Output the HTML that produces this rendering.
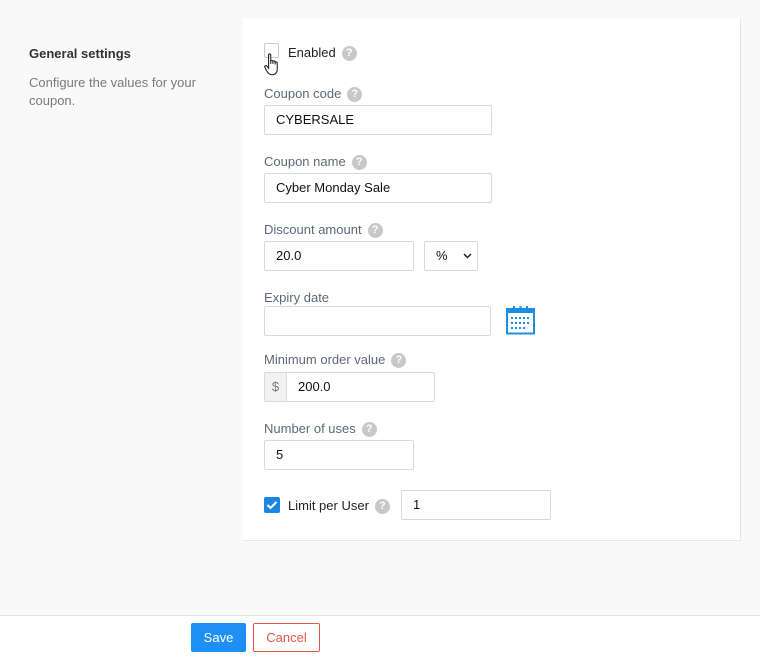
<!DOCTYPE html>
<html><head><style>
body{margin:0;width:760px;height:664px;background:#f9f9f9;font-family:"Liberation Sans",Arial,sans-serif;font-size:13px;position:relative;overflow:hidden}
.a{position:absolute}
.card{left:243px;top:18px;width:498px;height:523px;background:#fff;border:1px solid #e6e6e6;border-top:none;border-left:none;box-sizing:border-box}
.lbl{color:#5f6877;font-size:13px;line-height:16px}
.inp{border:1px solid #d9d9d9;box-sizing:border-box;height:30px;background:#fff;color:#111;line-height:28px;padding-left:11px;font-size:13px;border-radius:2px}
.q{display:inline-block;width:15px;height:15px;border-radius:50%;background:#c8c8c8;color:#fff;font-size:11px;font-weight:bold;text-align:center;line-height:15px;vertical-align:1px;margin-left:6px}
</style></head><body>
<div class="a" style="left:29px;top:46px;font-weight:bold;color:#333;font-size:13px">General settings</div>
<div class="a" style="left:29px;top:74px;color:#7a7a7a;font-size:13px;line-height:18px;width:190px">Configure the values for your coupon.</div>
<div class="a card"></div>

<div class="a" style="left:264px;top:43px;width:15px;height:15px;border:1px solid #ccc;box-sizing:border-box;border-radius:2px"></div>
<svg class="a" style="left:263px;top:52px" width="22" height="26" viewBox="0 0 20 24"><path d="M5 2.5c0-1 2-1 2 0V11l0-2.5c0-1 2-1 2 0V11l0-2c0-1 2-1 2 0v2.5l0-1.5c0-1 2-1 2 0v6c0 3-2 5-4.5 5S5 20 3 17L1.5 14c-.5-1 1-2 2-1L5 15z" fill="#fff" stroke="#222" stroke-width="1"/></svg>
<div class="a lbl" style="left:288px;top:45px;color:#222">Enabled<span class="q">?</span></div>

<div class="a lbl" style="left:264px;top:86px">Coupon code<span class="q">?</span></div>
<div class="a inp" style="left:264px;top:105px;width:228px">CYBERSALE</div>

<div class="a lbl" style="left:264px;top:154px">Coupon name<span class="q">?</span></div>
<div class="a inp" style="left:264px;top:173px;width:228px">Cyber Monday Sale</div>

<div class="a lbl" style="left:264px;top:222px">Discount amount<span class="q">?</span></div>
<div class="a inp" style="left:264px;top:241px;width:150px">20.0</div>
<div class="a inp" style="left:424px;top:241px;width:54px">%<svg class="a" style="left:38px;top:11px" width="9" height="6"><path d="M1 1l3.5 3.5L8 1" fill="none" stroke="#222" stroke-width="1.5"/></svg></div>

<div class="a lbl" style="left:264px;top:290px">Expiry date</div>
<div class="a inp" style="left:264px;top:306px;width:227px"></div>
<svg class="a" style="left:506px;top:305px" width="29" height="30" viewBox="0 0 29 30"><rect x="1" y="4" width="27" height="24.5" fill="none" stroke="#1a8fe3" stroke-width="2"/><rect x="1" y="4" width="27" height="4" fill="#1a8fe3"/><g fill="#1a8fe3"><rect x="7" y="1" width="2" height="6"/><rect x="13.5" y="1" width="2" height="6"/><rect x="20" y="1" width="2" height="6"/><rect x="5" y="12" width="2" height="2"/><rect x="9" y="12" width="2" height="2"/><rect x="13" y="12" width="2" height="2"/><rect x="17" y="12" width="2" height="2"/><rect x="21" y="12" width="2" height="2"/><rect x="5" y="17" width="2" height="2"/><rect x="9" y="17" width="2" height="2"/><rect x="13" y="17" width="2" height="2"/><rect x="17" y="17" width="2" height="2"/><rect x="21" y="17" width="2" height="2"/><rect x="5" y="22" width="2" height="2"/><rect x="9" y="22" width="2" height="2"/><rect x="13" y="22" width="2" height="2"/><rect x="17" y="22" width="2" height="2"/></g></svg>

<div class="a lbl" style="left:264px;top:352px">Minimum order value<span class="q">?</span></div>
<div class="a inp" style="left:264px;top:372px;width:171px;padding-left:0">
<span style="display:inline-block;width:21px;height:28px;background:#f2f2f2;border-right:1px solid #d9d9d9;text-align:center;color:#777;vertical-align:top">$</span><span style="padding-left:11px">200.0</span></div>

<div class="a lbl" style="left:264px;top:421px">Number of uses<span class="q">?</span></div>
<div class="a inp" style="left:264px;top:440px;width:150px">5</div>

<div class="a" style="left:264px;top:497px;width:16px;height:16px;background:#1a86e0;border-radius:2px"><svg width="16" height="16"><path d="M3.5 8l3 3 6-6" fill="none" stroke="#fff" stroke-width="2"/></svg></div>
<div class="a lbl" style="left:288px;top:498px;color:#222">Limit per User<span class="q">?</span></div>
<div class="a inp" style="left:401px;top:490px;width:150px">1</div>

<div class="a" style="left:0;top:615px;width:760px;height:49px;background:#fff;border-top:1px solid #e2e2e2"></div>
<div class="a" style="left:191px;top:623px;width:55px;height:29px;background:#1e90f5;color:#fff;text-align:center;line-height:30px;border-radius:2px">Save</div>
<div class="a" style="left:253px;top:623px;width:67px;height:29px;border:1px solid #e0584c;box-sizing:border-box;color:#e0584c;text-align:center;line-height:28px;border-radius:2px;background:#fff">Cancel</div>
</body></html>
